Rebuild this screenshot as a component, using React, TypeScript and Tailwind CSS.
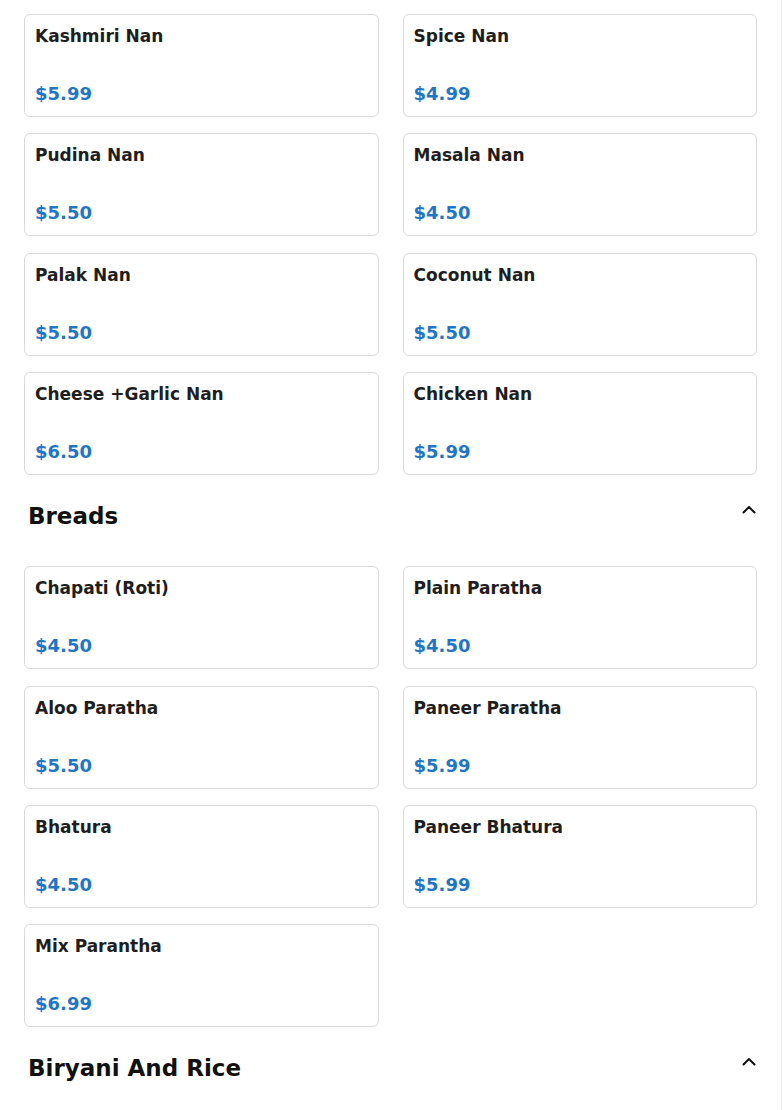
import React from 'react';

type Item = { name: string; price: string };

const nans: Item[] = [
  { name: 'Kashmiri Nan', price: '$5.99' },
  { name: 'Spice Nan', price: '$4.99' },
  { name: 'Pudina Nan', price: '$5.50' },
  { name: 'Masala Nan', price: '$4.50' },
  { name: 'Palak Nan', price: '$5.50' },
  { name: 'Coconut Nan', price: '$5.50' },
  { name: 'Cheese +Garlic Nan', price: '$6.50' },
  { name: 'Chicken Nan', price: '$5.99' },
];

const breads: Item[] = [
  { name: 'Chapati (Roti)', price: '$4.50' },
  { name: 'Plain Paratha', price: '$4.50' },
  { name: 'Aloo Paratha', price: '$5.50' },
  { name: 'Paneer Paratha', price: '$5.99' },
  { name: 'Bhatura', price: '$4.50' },
  { name: 'Paneer Bhatura', price: '$5.99' },
  { name: 'Mix Parantha', price: '$6.99' },
];

function Chevron() {
  return (
    <svg width="14" height="9" viewBox="0 0 14 9" fill="none" className="mt-[5px] mr-[1px]">
      <path d="M1.5 7.5 7 2l5.5 5.5" stroke="#111" strokeWidth="2" strokeLinecap="round" strokeLinejoin="round" />
    </svg>
  );
}

function ItemCard({ item }: { item: Item }) {
  return (
    <div className="h-[103px] rounded-md border border-[#dadada] bg-white px-[10px] pt-[9px] pb-[10px] flex flex-col justify-between">
      <div className="text-[17px] leading-[24px] font-bold text-[#1e1e1e]">{item.name}</div>
      <div className="text-[18px] leading-[24px] font-bold text-[#1f75c6]">{item.price}</div>
    </div>
  );
}

function ItemGrid({ items }: { items: Item[] }) {
  return (
    <div className="grid grid-cols-2 gap-x-6 gap-y-[16.4px]">
      {items.map((it) => (
        <ItemCard key={it.name} item={it} />
      ))}
    </div>
  );
}

function SectionHeader({ title }: { title: string }) {
  return (
    <div className="flex items-start justify-between pl-1 h-[32px]">
      <h2 className="text-[23px] leading-[32px] font-bold text-[#111]">{title}</h2>
      <Chevron />
    </div>
  );
}

export default function App() {
  return (
    <div
      className="w-[782px] h-[1110px] overflow-hidden bg-white border-r border-[#efefef] px-6 pt-[14px]"
      style={{ fontFamily: '"DejaVu Sans", Verdana, sans-serif' }}
    >
      <ItemGrid items={nans} />
      <div className="mt-[25px] mb-[34px]">
        <SectionHeader title="Breads" />
      </div>
      <ItemGrid items={breads} />
      <div className="mt-[25px] mb-[34px]">
        <SectionHeader title="Biryani And Rice" />
      </div>
    </div>
  );
}
